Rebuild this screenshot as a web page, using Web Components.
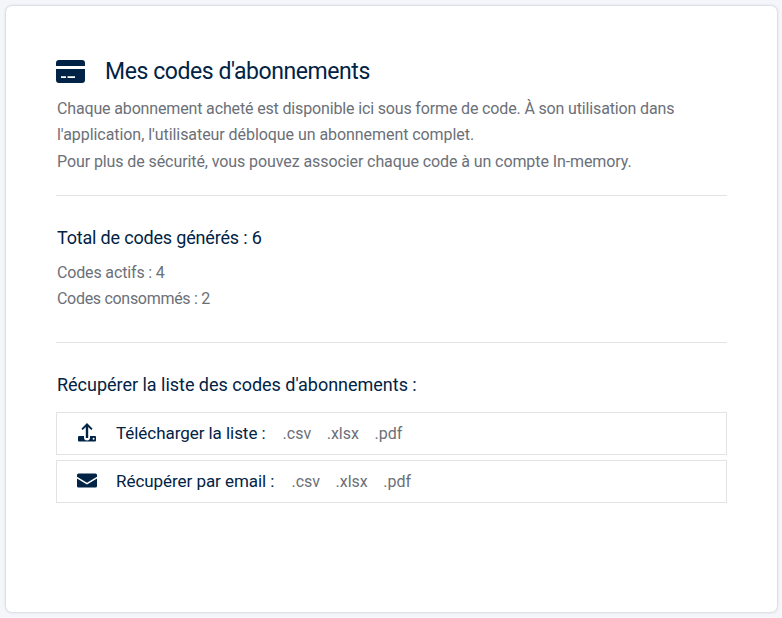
<!DOCTYPE html>
<html lang="fr"><head><meta charset="utf-8"><style>
html,body{margin:0;height:100%}
body{background:#f4f6fa;font-family:Roboto,"Liberation Sans",sans-serif;overflow:hidden}
span.l{display:block}
</style></head><body>
<template id="t-card"><style>
:host{display:block;box-sizing:border-box;margin:6px 5px 6px 6px;height:606px;background:#fff;border-radius:6px;box-shadow:0 0 3px rgba(30,40,80,.28);padding:50px 50px 0 50px}
</style><slot></slot></template>
<template id="t-head"><style>
:host{display:flex;align-items:flex-start;gap:20px;height:30px;color:#012345;font-size:23px;letter-spacing:-.43px;line-height:32px}
svg{width:29px;height:23px;flex:none;margin-top:4px}
</style><svg viewBox="0 0 29 23"><path fill="#012345" d="M3 0h23a3 3 0 0 1 3 3v3H0V3a3 3 0 0 1 3-3zM0 9h29v11a3 3 0 0 1-3 3H3a3 3 0 0 1-3-3z"/><path fill="#fff" d="M5 16.300h5V18H5zM11.500 16.300H19V18h-7.500z"/></svg><slot></slot></template>
<template id="t-sec"><style>
:host{display:block;color:#6b7078;font-size:16px;line-height:26.500px;padding-left:1px}
</style><slot></slot></template>
<template id="t-rule"><style>:host{display:block;height:1px;background:#e2e3e5}</style></template>
<template id="t-row"><style>
:host{display:flex;align-items:center;box-sizing:border-box;height:43px;border:1px solid #e2e3e5;color:#012345;font-size:17px;letter-spacing:-.05px}
.i{width:59px;display:flex;justify-content:center;flex:none}
.f{display:flex;gap:15.500px;margin-left:17px;color:#6b7078;font-size:16px;letter-spacing:0}
</style><span class="i"><slot name="icon"></slot></span><slot></slot><span class="f"><span>.csv</span><span>.xlsx</span><span>.pdf</span></span></template>
<script>
const def=(n,t)=>customElements.define(n,class extends HTMLElement{constructor(){super();this.attachShadow({mode:"open"}).append(document.getElementById(t).content.cloneNode(true))}});
def("x-card","t-card");def("x-head","t-head");def("x-sec","t-sec");def("x-rule","t-rule");def("x-row","t-row");
</script>
<x-card>
<x-head>Mes codes d'abonnements</x-head>
<x-sec style="margin-top:9.500px"><span class="l" style="letter-spacing:-.15px">Chaque abonnement acheté est disponible ici sous forme de code. À son utilisation dans</span><span class="l" style="letter-spacing:-.06px">l'application, l'utilisateur débloque un abonnement complet.</span><span class="l" style="letter-spacing:-.09px">Pour plus de sécurité, vous pouvez associer chaque code à un compte In-memory.</span></x-sec>
<x-rule style="margin-top:19.500px"></x-rule>
<x-sec style="margin-top:28px"><div style="color:#012345;font-size:18px;letter-spacing:-.18px;line-height:28px;margin-bottom:8px">Total de codes générés : 6</div><span class="l" style="letter-spacing:-.15px">Codes actifs : 4</span><span class="l" style="letter-spacing:-.3px">Codes consommés : 2</span></x-sec>
<x-rule style="margin-top:29px"></x-rule>
<x-sec style="margin-top:28px"><div style="color:#012345;font-size:18px;letter-spacing:-.02px;line-height:28px;margin-bottom:13px">Récupérer la liste des codes d'abonnements :</div></x-sec>
<x-row><svg slot="icon" viewBox="0 0 20 20" width="20" height="20" style="display:block"><path fill="#012345" d="M2 13h5v1.500a3 3 0 0 0 6 0V13h5a1 1 0 0 1 1 1v3.500a1 1 0 0 1-1 1H2a1 1 0 0 1-1-1V14a1 1 0 0 1 1-1z"/><path fill="#012345" d="M10 0l5.600 5.800-1.300 1.300-3.100-3.200V15H8.800V3.900L5.700 7.100 4.400 5.800z"/><circle cx="16.600" cy="15.800" r="1" fill="#fff"/></svg>Télécharger la liste :</x-row>
<x-row style="margin-top:5px"><svg slot="icon" viewBox="0 0 20 20" width="20" height="20" style="display:block"><path fill="#012345" d="M1.500 2.500h17A1.500 1.500 0 0 1 20 4v1.800l-10 6-10-6V4a1.500 1.500 0 0 1 1.500-1.500zM0 7.600l10 6 10-6V15a1.500 1.500 0 0 1-1.500 1.500h-17A1.500 1.500 0 0 1 0 15z"/></svg>Récupérer par email :</x-row>
</x-card>
</body></html>
